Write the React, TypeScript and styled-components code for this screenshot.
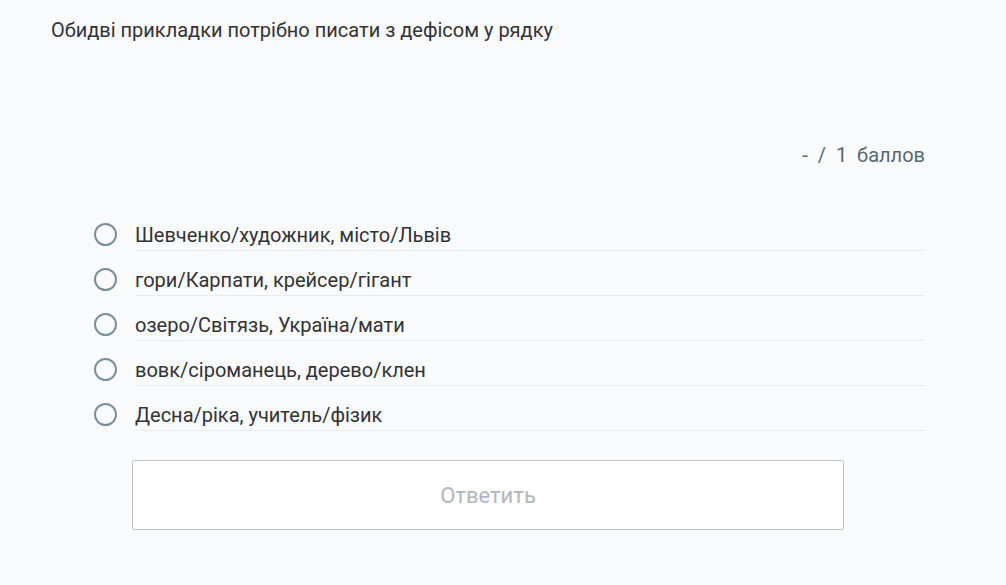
import React from "react";
import styled, { createGlobalStyle } from "styled-components";

const Global = createGlobalStyle`
  html, body { margin: 0; padding: 0; background: #f9fafc; }
  body { font-family: Roboto, "Noto Sans", sans-serif; }
`;

const Page = styled.div`
  width: 1006px;
  height: 585px;
  box-sizing: border-box;
  padding: 18px 81px 0 51px;
  background: #f9fafc;
  color: #333;
`;

const Title = styled.div`
  font-size: 20px;
  line-height: 24px;
  color: #333;
`;

const Score = styled.div`
  margin-top: 101px;
  text-align: right;
  font-size: 20px;
  line-height: 24px;
  color: #5b6770;
  word-spacing: 5px;
`;

const Options = styled.div`
  margin-top: 53px;
  padding-left: 42px;
  display: flex;
  flex-direction: column;
`;

const Row = styled.label`
  display: flex;
  align-items: flex-start;
  height: 45px;
  cursor: pointer;
`;

const Radio = styled.span`
  width: 19px;
  height: 19px;
  border: 2.5px solid #78909c;
  border-radius: 50%;
  flex: none;
  margin: 3px 18px 0 1px;
`;

const OptText = styled.span`
  flex: 1;
  height: 30px;
  line-height: 30px;
  font-size: 20px;
  color: #333;
  border-bottom: 1px solid #e8ecef;
`;

const ButtonWrap = styled.div`
  padding-left: 81px;
  margin-top: 15px;
`;

const AnswerButton = styled.button`
  width: 712px;
  height: 70px;
  background: #fff;
  border: 1px solid #c3c6c9;
  border-radius: 2px;
  font-family: Roboto, "Noto Sans", sans-serif;
  font-size: 22px;
  color: #b0b7bc;
`;

const options = [
  "Шевченко/художник, місто/Львів",
  "гори/Карпати, крейсер/гігант",
  "озеро/Світязь, Україна/мати",
  "вовк/сіроманець, дерево/клен",
  "Десна/ріка, учитель/фізик",
];

export default function App() {
  return (
    <Page>
      <Global />
      <Title>Обидві прикладки потрібно писати з дефісом у рядку</Title>
      <Score>- / 1 баллов</Score>
      <Options>
        {options.map((o) => (
          <Row key={o}>
            <Radio />
            <OptText>{o}</OptText>
          </Row>
        ))}
      </Options>
      <ButtonWrap>
        <AnswerButton>Ответить</AnswerButton>
      </ButtonWrap>
    </Page>
  );
}
